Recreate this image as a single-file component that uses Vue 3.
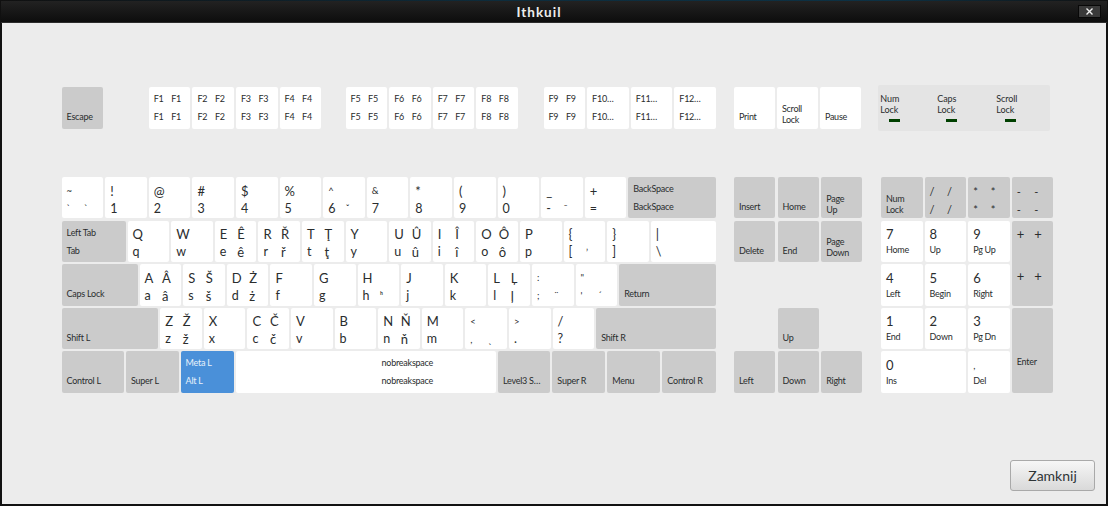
<template>
  <div class="window">
    <header class="titlebar">
      <span class="title">Ithkuil</span>
      <button class="close">
        <svg width="9" height="9" viewBox="0 0 9 9"><path d="M1.5 1.5 7.5 7.5M7.5 1.5 1.5 7.5" stroke="#f0f0f0" stroke-width="1.4" fill="none" /></svg>
      </button>
    </header>

    <main class="content">
      <div class="fn-row">
        <div class="group esc"><Key v-for="k in escKey" :key="k.id" :k="k" /></div>
        <div class="group f1"><Key v-for="k in fnGroups[0]" :key="k.id" :k="k" /></div>
        <div class="group f5"><Key v-for="k in fnGroups[1]" :key="k.id" :k="k" /></div>
        <div class="group f9"><Key v-for="k in fnGroups[2]" :key="k.id" :k="k" /></div>
        <div class="group print"><Key v-for="k in printKeys" :key="k.id" :k="k" /></div>
        <div class="leds">
          <div v-for="led in leds" :key="led.name" class="led">
            <span class="led-text">{{ led.name }}<br />Lock</span>
            <i class="led-bar"></i>
          </div>
        </div>
      </div>

      <div class="lower">
        <div class="alpha">
          <div v-for="(row, i) in alphaRows" :key="i" class="alpha-row">
            <Key v-for="k in row" :key="k.id" :k="k" />
          </div>
        </div>
        <div class="nav">
          <Key v-for="k in navKeys" :key="k.id" :k="k" />
        </div>
        <div class="numpad">
          <Key v-for="k in padKeys" :key="k.id" :k="k" />
        </div>
      </div>

      <div class="actions">
        <button class="zamknij">Zamknij</button>
      </div>
    </main>
  </div>
</template>

<script setup>
import { h } from 'vue'

let nextId = 0

// tl/bl = shift and base level, tr/br = third level on the right side
function key(tl, bl, tr, br, opts = {}) {
  return { id: nextId++, tl, bl, tr, br, kind: 'big', ...opts }
}
const letter = (up, low, up3 = '', low3 = '') => key(up, low, up3, low3)
const small = (tl, bl, opts = {}) => key(tl, bl, opts.tr || '', opts.br || '', { kind: 'small', gray: true, ...opts })
const mod = (text, opts = {}) => key('', text, '', '', { kind: 'small', gray: true, ...opts })
const fk = (n, cut) => key(n, n, cut ? '' : n, cut ? '' : n, { kind: 'small', gray: false, wide: cut })
const np = (top, bottom, opts = {}) => key(top, bottom, '', '', { kind: 'pad', ...opts })
const op = (c) => key(c, c, c, c, { kind: 'op', gray: true })

const escKey = [mod('Escape')]
const fnGroups = [
  [fk('F1'), fk('F2'), fk('F3'), fk('F4')],
  [fk('F5'), fk('F6'), fk('F7'), fk('F8')],
  [fk('F9'), fk('F10…', true), fk('F11…', true), fk('F12…', true)]
]
const printKeys = [
  mod('Print', { gray: false }),
  mod('Scroll\nLock', { gray: false, two: true }),
  mod('Pause', { gray: false })
]
const leds = [{ name: 'Num' }, { name: 'Caps' }, { name: 'Scroll' }]

const alphaRows = [
  [
    key('~', '`', '', '`', { kind: 'tiny' }),
    letter('!', '1'), letter('@', '2'), letter('#', '3'), letter('$', '4'), letter('%', '5'),
    key('^', '6', '', 'ˇ', { tinyTop: true, tinyR: true }),
    key('&', '7', '', '', { tinyTop: true }),
    letter('*', '8'), letter('(', '9'), letter(')', '0'),
    key('_', '-', '', '¯', { tinyR: true }),
    letter('+', '='),
    small('BackSpace', 'BackSpace', { w: 87.2 })
  ],
  [
    small('Left Tab', 'Tab', { w: 64 }),
    letter('Q', 'q'), letter('W', 'w'), letter('E', 'e', 'Ê', 'ê'), letter('R', 'r', 'Ř', 'ř'),
    letter('T', 't', 'Ţ', 'ţ'), letter('Y', 'y'), letter('U', 'u', 'Û', 'û'), letter('I', 'i', 'Î', 'î'),
    letter('O', 'o', 'Ô', 'ô'), letter('P', 'p'),
    key('{', '[', '', 'ʼ', { tinyR: true }),
    letter('}', ']'),
    key('|', '\\', '', '', { w: 65.2 })
  ],
  [
    mod('Caps Lock', { w: 76 }),
    letter('A', 'a', 'Â', 'â'), letter('S', 's', 'Š', 'š'), letter('D', 'd', 'Ż', 'ż'), letter('F', 'f'),
    letter('G', 'g'),
    key('H', 'h', '', 'ʰ', { tinyR: true }),
    letter('J', 'j'), letter('K', 'k'), letter('L', 'l', 'Ļ', 'ļ'),
    key(':', ';', '', '¨', { kind: 'tiny' }),
    key('"', "'", '', '´', { kind: 'tiny' }),
    mod('Return', { w: 96.8 })
  ],
  [
    mod('Shift L', { w: 96.6 }),
    letter('Z', 'z', 'Ž', 'ž'), letter('X', 'x'), letter('C', 'c', 'Č', 'č'), letter('V', 'v'),
    letter('B', 'b'), letter('N', 'n', 'Ň', 'ň'), letter('M', 'm'),
    key('<', ',', '', 'ˎ', { kind: 'tiny' }),
    key('>', '.', '', '', { tinyTop: true }),
    letter('/', '?'),
    mod('Shift R', { w: 119.8 })
  ],
  [
    mod('Control L', { w: 62.4 }),
    mod('Super L', { w: 52.6 }),
    small('Meta L', 'Alt L', { w: 53, active: true, gray: false }),
    small('nobreakspace', 'nobreakspace', { w: 260.4, gray: false, space: true }),
    mod('Level3 S…', { w: 52.4 }),
    mod('Super R', { w: 53 }),
    mod('Menu', { w: 53 }),
    mod('Control R', { w: 53.4 })
  ]
]

const navKeys = [
  mod('Insert'), mod('Home'), mod('Page\nUp', { two: true }),
  mod('Delete'), mod('End'), mod('Page\nDown', { two: true }),
  mod('Up', { col: 2, row: 4 }),
  mod('Left', { col: 1, row: 5 }), mod('Down', { col: 2, row: 5 }), mod('Right', { col: 3, row: 5 })
]

const padKeys = [
  mod('Num\nLock', { two: true }),
  op('/'), op('*'), op('-'),
  np('7', 'Home'), np('8', 'Up'), np('9', 'Pg Up'),
  key('+', '+', '+', '+', { kind: 'pad', gray: true, rowSpan: 2, plus: true }),
  np('4', 'Left'), np('5', 'Begin'), np('6', 'Right'),
  np('1', 'End'), np('2', 'Down'), np('3', 'Pg Dn'),
  mod('Enter', { rowSpan: 2, mid: true }),
  np('0', 'Ins', { colSpan: 2 }),
  np(',', 'Del', { tinyTop: true })
]

// one keyboard key, labels sit in a 2x2 grid
const Key = (props) => {
  const k = props.k
  const style = {}
  if (k.w) style.width = k.w + 'px'
  if (k.col) style.gridColumn = k.col
  if (k.row) style.gridRow = k.row
  if (k.colSpan) style.gridColumn = 'span ' + k.colSpan
  if (k.rowSpan) style.gridRow = 'span ' + k.rowSpan
  const cls = ['key', 'k-' + k.kind, {
    gray: k.gray, active: k.active, space: k.space, two: k.two,
    wide: k.wide, 'tiny-top': k.tinyTop, 'tiny-r': k.tinyR, plus: k.plus, mid: k.mid
  }]
  return h('div', { class: cls, style }, [
    h('span', { class: 'lb tl' }, k.tl),
    h('span', { class: 'lb tr' }, k.tr),
    h('span', { class: 'lb bl' }, k.bl),
    h('span', { class: 'lb br' }, k.br)
  ])
}
Key.props = ['k']
</script>

<style>
html, body {
  margin: 0;
  background: #0b1218;
}

/* Key is a function component, its labels don't get the scope attribute */
.key {
  width: 41.6px;
  height: 41.4px;
  box-sizing: border-box;
  flex: none;
  background: #fff;
  border-radius: 2px;
  display: grid;
  grid-template-columns: 17.5px 1fr;
  padding-left: 5px;
  white-space: nowrap;
}

.nav .key,
.numpad .key {
  width: auto;
  height: auto;
}

.fn-row .key {
  height: 42px;
}

.fn-row .print {
  gap: 2.6px;
}

.fn-row .print .key {
  width: 41px;
}

.key.gray { background: #cbcbcb; }
.key.active { background: #4a90d9; color: #e8f0fa; }
.key.wide { grid-template-columns: 1fr 0; }

.lb {
  line-height: 1;
  align-self: center;
  white-space: pre;
}

.tl { grid-area: 1 / 1; }
.tr { grid-area: 1 / 2; }
.bl { grid-area: 2 / 1; }
.br { grid-area: 2 / 2; }

/* letter and digit keys */
.k-big {
  padding-top: 5.5px;
  grid-template-rows: 17px 19px;
  font-size: 13px;
}
.k-big .bl { font-size: 12.5px; }

/* modifier and function keys */
.k-small {
  padding-top: 2.5px;
  grid-template-rows: 18px 18px;
  font-size: 9px;
  letter-spacing: -0.25px;
}
.k-small .lb { line-height: 11px; }
.two .bl { transform: translateY(-3px); }

/* numeric keypad */
.k-pad {
  padding-top: 6px;
  grid-template-rows: 16px 14px;
  font-size: 13px;
}
.k-pad .bl {
  font-size: 9px;
  letter-spacing: -0.25px;
}

/* keypad operators */
.k-op {
  padding-top: 5.5px;
  grid-template-rows: 17px 19px;
  font-size: 11px;
}

/* keys with only small punctuation */
.k-tiny {
  padding-top: 5.5px;
  grid-template-rows: 17px 19px;
  font-size: 9.5px;
}

.tiny-top .tl { font-size: 9.5px; }
.tiny-r .br,
.tiny-r .tr { font-size: 9.5px; }

.key.space {
  padding-left: 146px;
}

.key.plus {
  grid-template-rows: 16px 68px;
}
.key.plus .bl { font-size: 13px; }

.key.mid {
  grid-template-rows: 18px 66px;
}
</style>

<style scoped>
.window {
  width: 1108px;
  height: 506px;
  box-sizing: border-box;
  padding: 1px 2px 2px;
  background: linear-gradient(90deg, #101010, #0d2c3c 45%, #0c3144 80%, #111 100%);
  display: flex;
  flex-direction: column;
  font-family: Lato, "Noto Sans", sans-serif;
  overflow: hidden;
  position: relative;
  color: #2a2d2e;
}

.titlebar {
  height: 22px;
  flex: none;
  position: relative;
  background: linear-gradient(#222, #0d0d0d);
  border-bottom: 1px solid #2c2c2c;
  box-sizing: border-box;
  margin: 0 -1px;
  display: flex;
  align-items: center;
  justify-content: center;
  padding-right: 30px;
}

.title {
  color: #ededed;
  font-weight: 700;
  font-size: 13.5px;
  letter-spacing: 1px;
}

.close {
  position: absolute;
  right: 6px;
  top: 4px;
  width: 23px;
  height: 13px;
  padding: 0;
  background: #3a3a3a;
  border: 1px solid #080808;
  display: flex;
  align-items: center;
  justify-content: center;
}

.content {
  flex: 1;
  background: #ececec;
  display: flex;
  flex-direction: column;
  padding-top: 64px;
  box-sizing: border-box;
  font-size: 9px;
  letter-spacing: -0.1px;
  box-shadow: 0 0 0 2px #111;
}

.fn-row {
  display: flex;
  align-items: center;
  height: 42px;
  padding-left: 59.6px;
}

.group {
  display: flex;
  gap: 2px;
}

.f1 { margin-left: 45.6px; }
.f5 { margin-left: 24.4px; }
.f9 { margin-left: 25.6px; }
.print { margin-left: 18px; }

.leds {
  margin-left: 17.4px;
  width: 172px;
  height: 46px;
  background: #e4e4e4;
  display: flex;
  border-radius: 2px;
  padding: 8px 0 0 2px;
  box-sizing: border-box;
}

.led {
  flex: none;
  width: 57px;
  line-height: 11px;
}

.led:nth-child(2) {
  width: 59px;
}

.led-text {
  display: block;
}

.led-bar {
  display: block;
  width: 11px;
  height: 3px;
  background: #004000;
  margin: 4px 0 0 9px;
}

.lower {
  margin-top: 48px;
  padding-left: 59.6px;
  display: flex;
}

.alpha {
  width: 654.4px;
  display: flex;
  flex-direction: column;
  gap: 2.2px;
}

.alpha-row {
  display: flex;
  gap: 2px;
}

.nav,
.numpad {
  display: grid;
  grid-auto-rows: 41.4px;
  gap: 2.2px 2px;
}

.nav {
  margin-left: 18px;
  grid-template-columns: repeat(3, 41px);
  column-gap: 2.6px;
}

.numpad {
  margin-left: 18.8px;
  grid-template-columns: repeat(4, 41.6px);
}

.actions {
  margin-top: auto;
  display: flex;
  justify-content: flex-end;
  padding: 0 11px 13px 0;
}

.zamknij {
  width: 85px;
  height: 31px;
  padding: 0;
  border: 1px solid #a9a9a9;
  border-radius: 3px;
  background: linear-gradient(#f6f6f6, #d9d9d9);
  color: #2e3436;
  font-family: inherit;
  font-size: 14px;
}
</style>
